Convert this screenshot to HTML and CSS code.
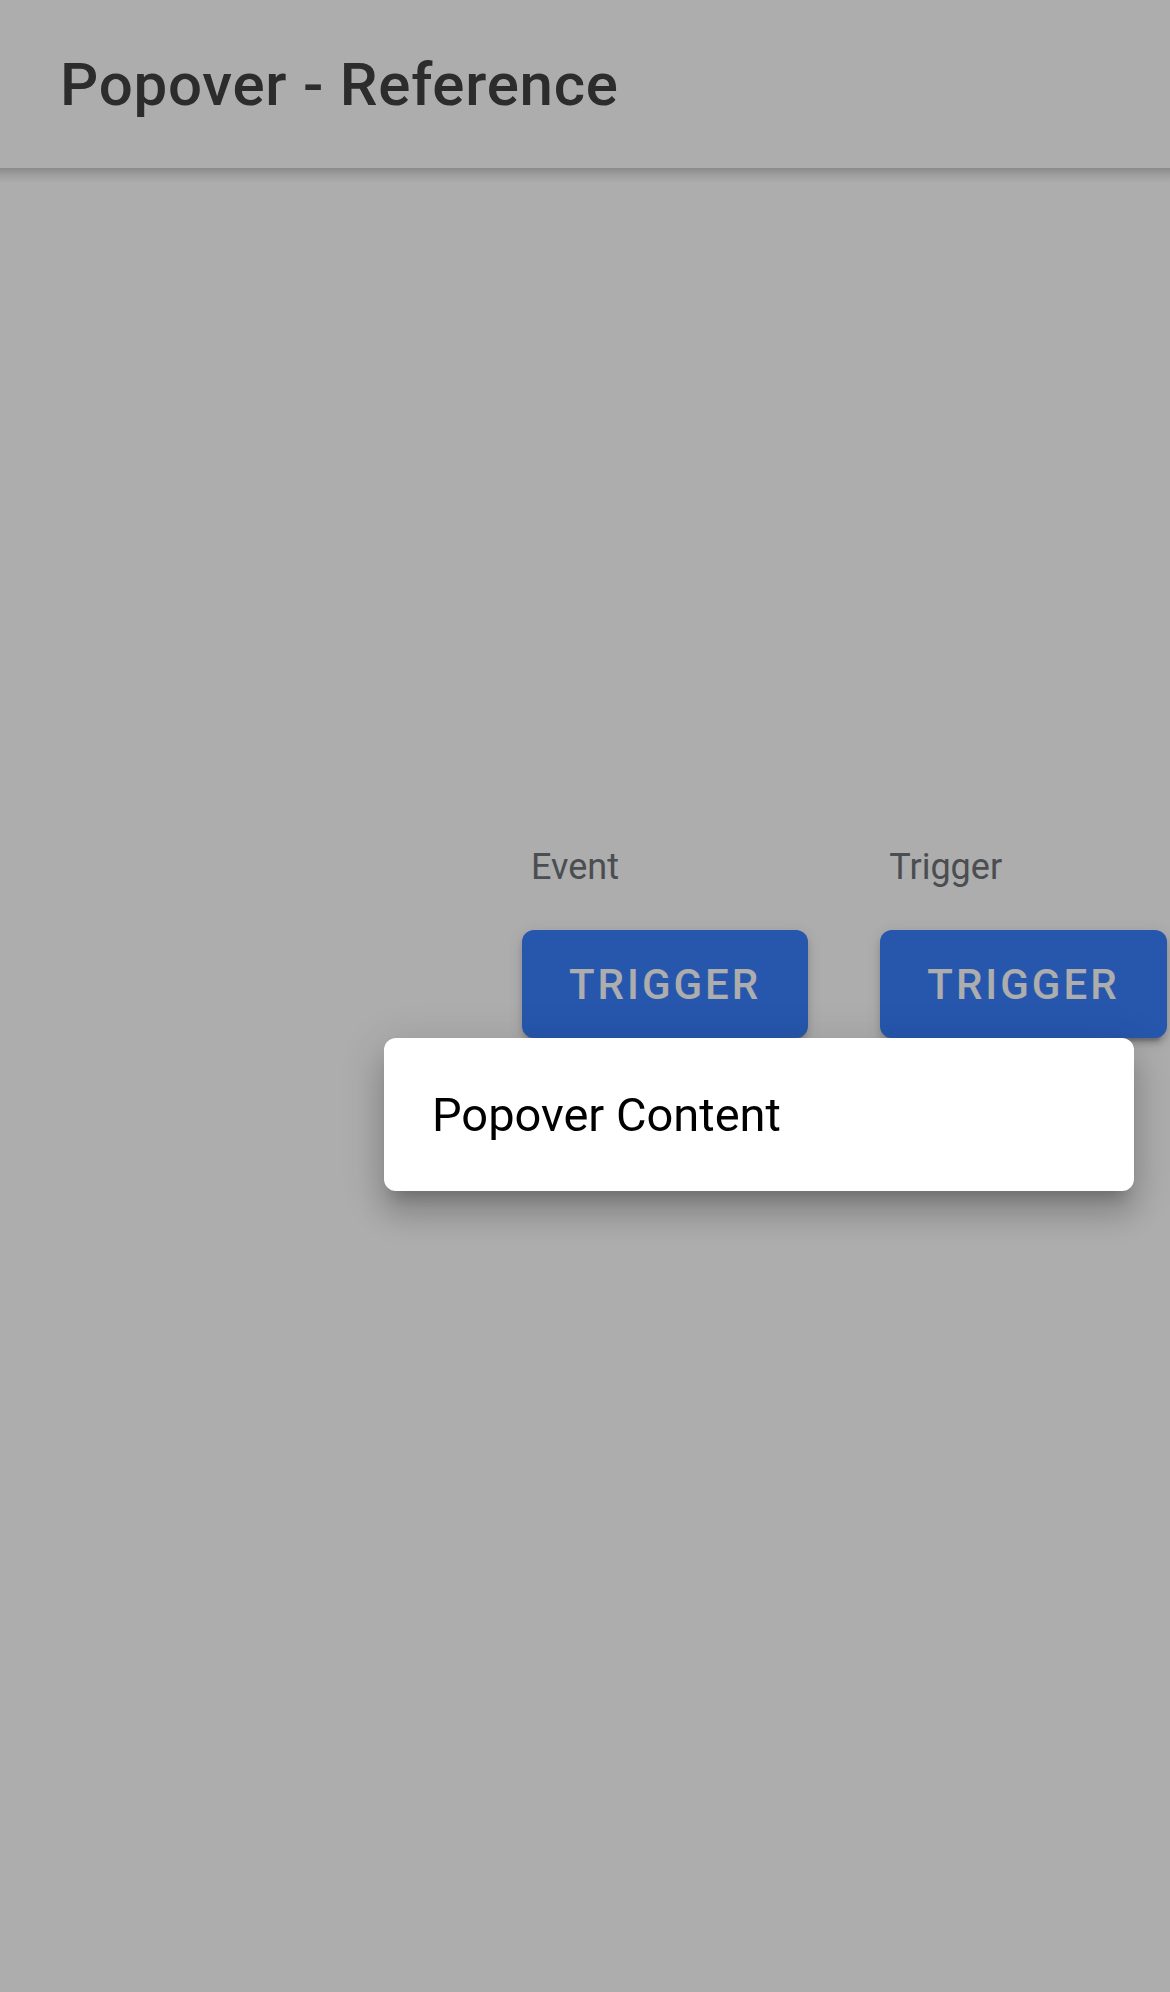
FILE: index.html
```html
<!DOCTYPE html>
<html lang="en">
<head>
  <meta charset="utf-8">
  <meta name="viewport" content="width=device-width, initial-scale=1">
  <title>Popover - Reference</title>
  <link rel="stylesheet" href="styles.css">
</head>
<body>
  <header class="header">
    <h1 class="title">Popover - Reference</h1>
  </header>
  <main class="content">
    <div class="grid">
      <section class="cell">
        <h2 class="label">Event</h2>
        <button class="button" type="button" aria-expanded="true" aria-controls="popover">Trigger</button>
        <div class="popover" id="popover" role="dialog" aria-label="Popover">Popover Content</div>
      </section>
      <section class="cell">
        <h2 class="label">Trigger</h2>
        <button class="button" type="button">Trigger</button>
      </section>
    </div>
  </main>
  <div class="backdrop"></div>
</body>
</html>
```
FILE: styles.css
```css
* {
  box-sizing: border-box;
}

body {
  display: flex;
  flex-direction: column;
  min-height: 100vh;
  margin: 0;
  background: #fff;
  color: #000;
  font-family: Roboto, sans-serif;
}

.header {
  position: relative;
  padding: 49px 60px 47px;
}

/* soft shadow below the toolbar */
.header::after {
  content: "";
  position: absolute;
  top: 100%;
  left: 0;
  right: 0;
  height: 15px;
  background: linear-gradient(rgba(0, 0, 0, 0.2), rgba(0, 0, 0, 0.08) 50%, rgba(0, 0, 0, 0));
}

.title {
  margin: 0;
  color: #424242;
  font-size: 60px;
  font-weight: 500;
  line-height: 72px;
  letter-spacing: 0.0125em;
}

.content {
  flex: 1;
  overflow: hidden;
  padding-top: 677px;
  padding-left: 44.1%;
}

.grid {
  display: flex;
  gap: 60px;
}

.cell {
  position: relative;
  flex: none;
}

.label {
  margin: 0 0 41px 15px;
  color: #6f7378;
  font-size: 36px;
  font-weight: 400;
  line-height: 44px;
}

.button {
  display: block;
  height: 108px;
  margin: 6px;
  padding: 0 47px;
  border: 0;
  border-radius: 12px;
  background: #3880ff;
  box-shadow: 0 9px 3px -6px rgba(0, 0, 0, 0.2), 0 6px 6px 0 rgba(0, 0, 0, 0.14), 0 3px 15px 0 rgba(0, 0, 0, 0.12);
  color: #fff;
  font: inherit;
  font-size: 42px;
  font-weight: 500;
  letter-spacing: 3px;
  text-transform: uppercase;
}

.backdrop {
  position: fixed;
  inset: 0;
  z-index: 1;
  background: rgba(0, 0, 0, 0.32);
}

.popover {
  position: absolute;
  z-index: 2;
  bottom: -147px;
  left: -132px;
  width: 750px;
  padding: 48px;
  border-radius: 12px;
  background: #fff;
  box-shadow: 0 15px 15px -9px rgba(0, 0, 0, 0.2), 0 24px 30px 3px rgba(0, 0, 0, 0.14), 0 9px 42px 6px rgba(0, 0, 0, 0.12);
  font-size: 47px;
  line-height: 57px;
}
```
